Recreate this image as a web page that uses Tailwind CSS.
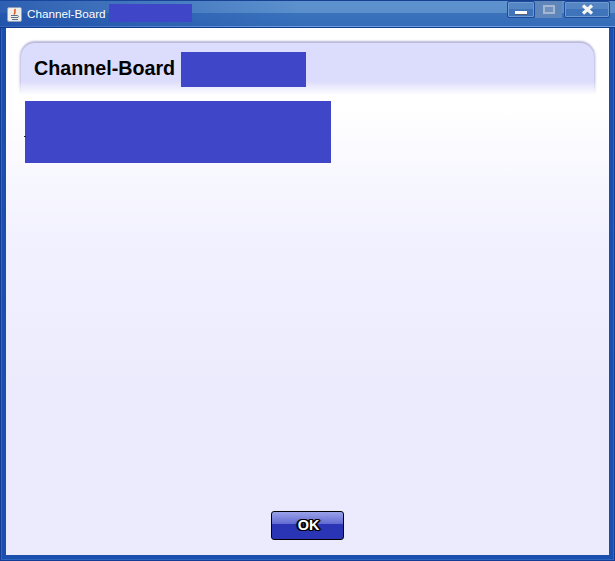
<!DOCTYPE html>
<html>
<head>
<meta charset="utf-8">
<script src="https://cdn.jsdelivr.net/npm/@tailwindcss/browser@4"></script>
</head>
<body class="m-0 overflow-hidden">
<div class="w-[615px] h-[561px] flex flex-col overflow-hidden font-['Liberation_Sans',Arial,sans-serif] bg-[#1a4fae] shadow-[inset_0_0_0_1px_#123c96,inset_0_0_0_2px_#2f66c4,inset_0_0_0_4px_#1a4fae]">
  <div class="relative h-[28px] shrink-0 flex items-start bg-[linear-gradient(to_bottom,#17408f_0,#17408f_1px,#5d92ce_1px,#5a8fcc_13px,#3a72bc_13px,#356cb8_26px,#6aa0e0_26px,#6aa0e0_27px,#123a8c_27px)]">
    <div class="absolute left-0 top-0 w-[300px] h-[27px] bg-gradient-to-r from-[#1a4aa6]/70 to-transparent"></div>
    <div class="relative ml-[7px] mt-[7px] w-[15px] h-[15px] bg-[#f0eee6] border border-[#8fa0bc] rounded-[2px] flex items-center justify-center">
      <svg width="13" height="13" viewBox="0 0 13 13"><path d="M7.5 1C5.5 2.5 8.5 4 6 6.5" stroke="#d9541e" stroke-width="1.5" fill="none"/><path d="M3 7.5h6M3 9.5h7M4 11.5h6M9 7.5c2 0 2 2 0 2" stroke="#5a6f8c" stroke-width="1" fill="none"/></svg>
    </div>
    <span class="relative ml-[5px] mt-[7px] text-[11.7px] leading-[14px] text-white">Channel-Board</span>
    <div class="relative ml-[3px] mt-[4px] w-[83px] h-[18px] bg-[#3f46c8]"></div>
    <div class="relative ml-auto mr-[5px] mt-[1px] flex items-start gap-[2px]">
      <div class="flex">
        <div class="w-[28px] h-[17px] bg-[linear-gradient(to_bottom,#5685c4_0,#5685c4_50%,#3f74bb_50%)] border border-[#1c4a9e] rounded-[2px] shadow-[inset_0_0_0_1px_#6f9ad0] flex items-end justify-center pb-[2px]">
          <div class="w-[12px] h-[4px] bg-white border-b border-[#55606e]"></div>
        </div>
        <div class="w-[27px] h-[17px] bg-[#5f86ba] flex items-center justify-center">
          <div class="w-[12px] h-[9px] border-2 border-[#a3b6d2] bg-[#6f90bf]"></div>
        </div>
      </div>
      <div class="w-[46px] h-[17px] bg-[linear-gradient(to_bottom,#5685c4_0,#5685c4_50%,#3f74bb_50%)] border border-[#1c4a9e] rounded-[2px] shadow-[inset_0_0_0_1px_#6f9ad0] flex items-center justify-center">
        <svg width="13" height="11" viewBox="0 0 13 11"><path d="M2 1.5l9 8M11 1.5l-9 8" stroke="#f4f4f0" stroke-width="3.2"/></svg>
      </div>
    </div>
  </div>
  <div class="flex-1 mx-[6px] mb-[6px] flex flex-col items-stretch bg-gradient-to-b from-white from-15% via-[#f2f1ff] via-40% to-[#ebebfd] to-70%">
    <div class="relative mt-[15px] mx-[15px] h-[52px] rounded-t-[14px] bg-[#dcdcfd] shadow-[0_-2px_2px_#b9b8d8,-2px_0_3px_-1px_#bdbce4,2px_0_3px_-1px_#bdbce4] flex items-start pl-[13px] pt-[9px]">
      <div class="absolute left-[-5px] right-[-5px] bottom-[-4px] h-[18px] bg-[linear-gradient(to_bottom,#ffffff00_0,#ffffff_78%)]"></div>
      <span class="relative text-[19.7px] leading-[32px] font-bold text-black">Channel-Board</span>
      <div class="relative ml-[6px] w-[125px] h-[35px] bg-[#3f46c8]"></div>
    </div>
    <div class="relative ml-[19px] mt-[6px] w-[306px] h-[62px] bg-[#3f46c8]">
      <div class="absolute left-[-1px] top-[35px] w-[2px] h-[1px] bg-[#222]"></div>
    </div>
    <div class="mt-auto mb-[15px] ml-[265px] w-[73px] h-[29px] rounded-[3px] border border-black bg-[linear-gradient(to_bottom,#9aa2ea_0,#6068d0_46%,#2a35b6_46%,#2a35b6_100%)] flex items-center justify-center">
      <span class="pl-[2px] text-[14.5px] leading-[15px] font-bold text-white [text-shadow:1px_0_0_#000,-1px_0_0_#000,0_1px_0_#000,0_-1px_0_#000,1px_1px_0_#000,-1px_-1px_0_#000,1px_-1px_0_#000,-1px_1px_0_#000,2px_0_1px_#000,-2px_0_1px_#000]">OK</span>
    </div>
  </div>
</div>
</body>
</html>
